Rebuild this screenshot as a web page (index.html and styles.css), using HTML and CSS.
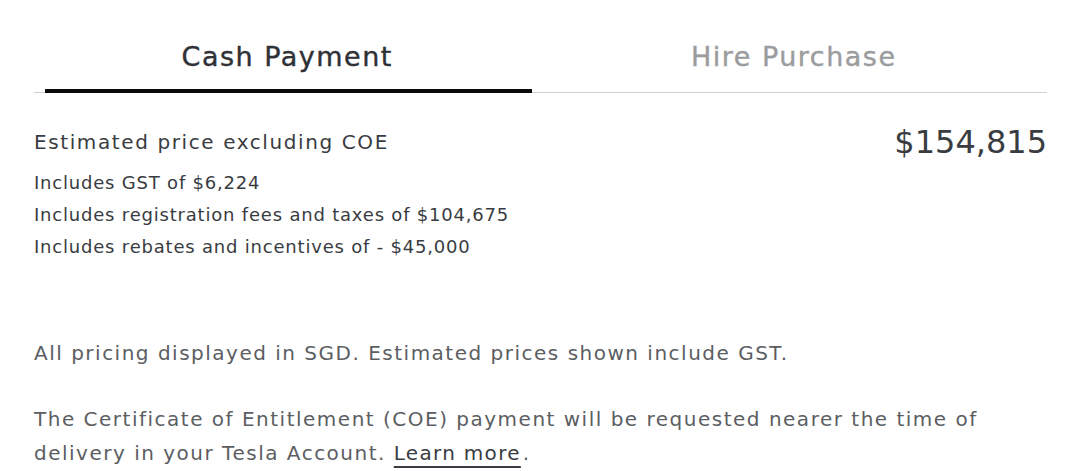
FILE: index.html
```html
<!DOCTYPE html>
<html>
<head>
<meta charset="utf-8">
<link rel="stylesheet" href="styles.css">
</head>
<body>
<div class="page">
  <div class="tabs">
    <div class="tab active"><span class="tab-label">Cash Payment</span><span class="bar"></span></div>
    <div class="tab"><span class="tab-label">Hire Purchase</span></div>
  </div>
  <div class="summary">
    <div class="details">
      <div class="title">Estimated price excluding COE</div>
      <div class="line">Includes GST of $6,224</div>
      <div class="line">Includes registration fees and taxes of $104,675</div>
      <div class="line">Includes rebates and incentives of - $45,000</div>
    </div>
    <div class="price">$154,815</div>
  </div>
  <p class="note first">All pricing displayed in SGD. Estimated prices shown include GST.</p>
  <p class="note coe">The Certificate of Entitlement (COE) payment will be requested nearer the time of delivery in your Tesla Account. <a class="link" href="#">Learn more</a><span class="dot">.</span></p>
</div>
</body>
</html>
```
FILE: styles.css
```css
html, body {
  margin: 0;
  padding: 0;
  background: #ffffff;
}
body {
  font-family: "DejaVu Sans", "Liberation Sans", sans-serif;
  color: #393c41;
}
.page {
  width: 1013px;
  padding-left: 34px;
}
.tabs {
  display: flex;
  border-bottom: 1px solid #d0d1d2;
  height: 92px;
}
.tab {
  flex: 1;
  position: relative;
  display: flex;
  justify-content: center;
  padding-top: 39px;
  box-sizing: border-box;
}
.tab-label {
  font-size: 27px;
  line-height: 36px;
  letter-spacing: 1.5px;
  color: #9b9c9e;
  -webkit-text-stroke: 0.4px currentColor;
}
.tab.active .tab-label {
  color: #2f3136;
}
.bar {
  position: absolute;
  left: 11px;
  right: 9px;
  bottom: -1px;
  height: 4px;
  background: #0a0a0a;
}
.summary {
  display: flex;
  justify-content: space-between;
  align-items: flex-start;
  padding-top: 28px;
}
.title {
  font-size: 20px;
  line-height: 42px;
  letter-spacing: 1.6px;
  margin-bottom: 4px;
  color: #393c41;
}
.line {
  font-size: 18px;
  line-height: 32px;
  letter-spacing: 0.8px;
  color: #393c41;
}
.price {
  font-size: 32px;
  line-height: 42px;
  color: #393c41;
}
.note {
  margin: 0;
  font-size: 20px;
  line-height: 34px;
  letter-spacing: 1.5px;
  color: #5c5e62;
  width: 1000px;
}
.note.first {
  margin-top: 73px;
}
.coe {
  margin-top: 32px;
}
.link {
  color: #393c41;
  letter-spacing: 1.3px;
  text-decoration: underline;
  text-decoration-thickness: 2px;
  text-underline-offset: 6px;
}
.dot {
  padding-left: 2px;
}
```
